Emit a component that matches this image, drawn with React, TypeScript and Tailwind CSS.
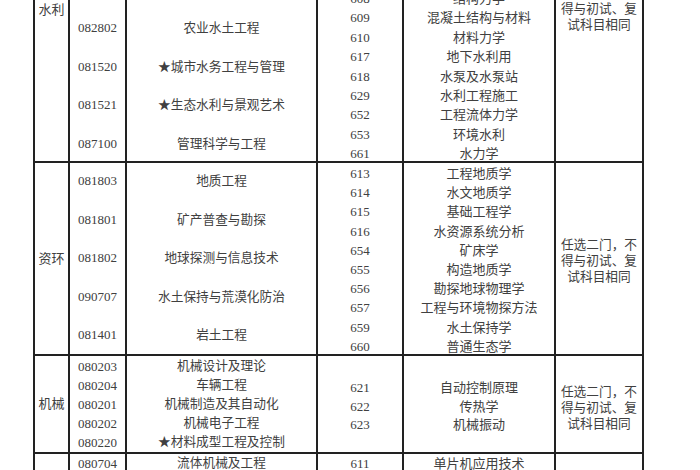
import type { ReactNode } from "react";

type Row = [string, string];

interface SectionProps {
  dept: string;
  majors: Row[];
  exams: Row[];
  note?: string[];
  height: string;
  majorLead: string;
  examLead: string;
  align?: string;
  deptPad?: string;
  majorPad?: string;
  examPad?: string;
  notePad?: string;
}

function Col({ w, align, pad, children }: { w: string; align: string; pad?: string; children: ReactNode }) {
  return (
    <div className={`${w} border-r-2 border-[#222] ${align} flex flex-col items-center shrink-0`}>
      <div className={`${pad ?? ""} flex flex-col items-center`}>{children}</div>
    </div>
  );
}

function Section({
  dept,
  majors,
  exams,
  note,
  height,
  majorLead,
  examLead,
  align = "justify-center",
  deptPad,
  majorPad,
  examPad,
  notePad,
}: SectionProps) {
  return (
    <div className={`flex border-b-2 border-[#222] ${height}`}>
      <Col w="w-[35px]" align={align} pad={deptPad}>
        <span className="text-[13px] leading-[16px]">{dept}</span>
      </Col>
      <Col w="w-[57px]" align={align} pad={majorPad}>
        {majors.map(([code]) => (
          <div key={code} className={`${majorLead} text-[13px] whitespace-nowrap`}>{code}</div>
        ))}
      </Col>
      <Col w="w-[191px]" align={align} pad={majorPad}>
        {majors.map(([code, name]) => (
          <div key={code} className={`${majorLead} text-[12.7px] whitespace-nowrap`}>{name}</div>
        ))}
      </Col>
      <Col w="w-[86px]" align={align} pad={examPad}>
        {exams.map(([code]) => (
          <div key={code} className={`${examLead} text-[13px] whitespace-nowrap`}>{code}</div>
        ))}
      </Col>
      <Col w="w-[152px]" align={align} pad={examPad}>
        {exams.map(([code, name]) => (
          <div key={code} className={`${examLead} text-[13px] whitespace-nowrap`}>{name}</div>
        ))}
      </Col>
      <Col w="w-[88px]" align={align} pad={notePad}>
        {note?.map((t) => (
          <div key={t} className="leading-[16px] text-[12.7px] whitespace-nowrap">{t}</div>
        ))}
      </Col>
    </div>
  );
}

const note = ["任选二门，不", "得与初试、复", "试科目相同"];

export default function App() {
  return (
    <div
      className="w-[700px] h-[470px] overflow-hidden bg-white text-[#404040]"
      style={{ fontFamily: '"Liberation Serif", "Noto Sans CJK SC", serif' }}
    >
      {/* table continues above and below the visible area */}
      <div className="ml-[33px] w-[611px] border-l-2 border-[#222]">
        <Section
          dept="水利"
          height="h-[163px]"
          align="justify-start"
          deptPad="pt-[2px]"
          majorPad="pt-[9px]"
          examPad="-mt-[11px]"
          notePad="-mt-[15px]"
          majorLead="leading-[38.7px]"
          examLead="leading-[19.4px]"
          majors={[
            ["082802", "农业水土工程"],
            ["081520", "★城市水务工程与管理"],
            ["081521", "★生态水利与景观艺术"],
            ["087100", "管理科学与工程"],
          ]}
          exams={[
            ["608", "结构力学"],
            ["609", "混凝土结构与材料"],
            ["610", "材料力学"],
            ["617", "地下水利用"],
            ["618", "水泵及水泵站"],
            ["629", "水利工程施工"],
            ["652", "工程流体力学"],
            ["653", "环境水利"],
            ["661", "水力学"],
          ]}
          note={note}
        />
        <Section
          dept="资环"
          height="h-[193px]"
          majorLead="leading-[38.5px]"
          examLead="leading-[19.2px]"
          examPad="pt-[3px]"
          notePad="pt-[5px]"
          majors={[
            ["081803", "地质工程"],
            ["081801", "矿产普查与勘探"],
            ["081802", "地球探测与信息技术"],
            ["090707", "水土保持与荒漠化防治"],
            ["081401", "岩土工程"],
          ]}
          exams={[
            ["613", "工程地质学"],
            ["614", "水文地质学"],
            ["615", "基础工程学"],
            ["616", "水资源系统分析"],
            ["654", "矿床学"],
            ["655", "构造地质学"],
            ["656", "勘探地球物理学"],
            ["657", "工程与环境物探方法"],
            ["659", "水土保持学"],
            ["660", "普通生态学"],
          ]}
          note={note}
        />
        <Section
          dept="机械"
          height="h-[98px]"
          majorLead="leading-[19px]"
          examLead="leading-[18.5px]"
          examPad="pt-[6px]"
          notePad="pt-[7px]"
          majors={[
            ["080203", "机械设计及理论"],
            ["080204", "车辆工程"],
            ["080201", "机械制造及其自动化"],
            ["080202", "机械电子工程"],
            ["080220", "★材料成型工程及控制"],
          ]}
          exams={[
            ["621", "自动控制原理"],
            ["622", "传热学"],
            ["623", "机械振动"],
          ]}
          note={note}
        />
        <div className="flex h-[20px]">
          <div className="w-[35px] border-r-2 border-[#222] shrink-0" />
          <div className="w-[57px] border-r-2 border-[#222] shrink-0 text-center text-[13px] leading-[19px]">080704</div>
          <div className="w-[191px] border-r-2 border-[#222] shrink-0 text-center text-[12.7px] leading-[19px]">流体机械及工程</div>
          <div className="w-[86px] border-r-2 border-[#222] shrink-0 text-center text-[13px] leading-[19px]">611</div>
          <div className="w-[152px] border-r-2 border-[#222] shrink-0 text-center text-[13px] leading-[19px]">单片机应用技术</div>
          <div className="w-[88px] border-r-2 border-[#222] shrink-0" />
        </div>
      </div>
    </div>
  );
}
